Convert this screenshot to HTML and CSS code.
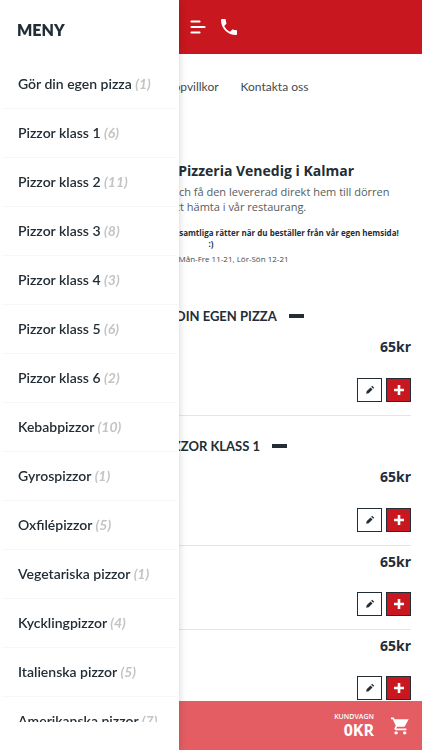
FILE: index.html
```html
<!DOCTYPE html>
<html lang="sv">
<head>
<meta charset="utf-8">
<meta name="viewport" content="width=device-width, initial-scale=1">
<title>Pizzeria Venedig</title>
<link rel="stylesheet" href="styles.css">
</head>
<body>
<svg class="sprite" aria-hidden="true">
  <symbol id="pencil" viewBox="0 0 12 12"><path d="M2 7.600 6.600 3 9 5.400 4.400 10 1.400 10.600zM7.400 2.200 8.600 1 11 3.400 9.800 4.600z"/></symbol>
  <symbol id="plus" viewBox="0 0 12 12"><path d="M4.700 1h2.600v3.700H11v2.600H7.300V11H4.700V7.300H1V4.700h3.700z"/></symbol>
</svg>

<header class="topbar">
  <button class="icon-button" aria-label="Meny">
    <svg width="16" height="14" viewBox="0 0 16 14" stroke="currentColor" stroke-width="2.2" stroke-linecap="round"><path d="M1.500 1.500h8M1.500 7h13M1.500 12.500h8"/></svg>
  </button>
  <a class="icon-button" href="#ring" aria-label="Ring oss">
    <svg width="16" height="16" viewBox="3 3 18 18" fill="currentColor"><path d="M6.620 10.790c1.440 2.830 3.760 5.140 6.590 6.590l2.200-2.200c.27-.27.67-.36 1.020-.24 1.120.37 2.330.57 3.570.57.55 0 1 .45 1 1V20c0 .55-.45 1-1 1-9.390 0-17-7.610-17-17 0-.55.45-1 1-1h3.500c.55 0 1 .45 1 1 0 1.250.2 2.450.57 3.570.11.35.03.74-.25 1.020z"/></svg>
  </a>
</header>

<nav class="links">
  <a href="#villkor">Köpvillkor</a>
  <a href="#kontakt">Kontakta oss</a>
</nav>

<main class="content">
  <section class="intro">
    <h1>Välkommen till Pizzeria Venedig i Kalmar</h1>
    <p class="lead">Beställ din pizza online här och få den levererad direkt hem till dörren<br>beställ för att hämta i vår restaurang.</p>
    <p class="offer">Just nu får du alltid hela 10% rabatt på samtliga rätter när du beställer från vår egen hemsida!<br>:)</p>
    <p class="hours">Öppettider: Mån-Fre 11-21, Lör-Sön 12-21</p>
  </section>

  <section class="group">
    <h2>GÖR DIN EGEN PIZZA<span class="dash"></span></h2>
    <article class="item">
      <strong class="price">65kr</strong>
      <div class="actions">
        <button class="square" aria-label="Anpassa"><svg><use href="#pencil"/></svg></button>
        <button class="square add" aria-label="Lägg till"><svg><use href="#plus"/></svg></button>
      </div>
    </article>
  </section>

  <section class="group">
    <h2>PIZZOR KLASS 1<span class="dash"></span></h2>
    <article class="item">
      <strong class="price">65kr</strong>
      <div class="actions">
        <button class="square" aria-label="Anpassa"><svg><use href="#pencil"/></svg></button>
        <button class="square add" aria-label="Lägg till"><svg><use href="#plus"/></svg></button>
      </div>
    </article>
    <article class="item">
      <strong class="price">65kr</strong>
      <div class="actions">
        <button class="square" aria-label="Anpassa"><svg><use href="#pencil"/></svg></button>
        <button class="square add" aria-label="Lägg till"><svg><use href="#plus"/></svg></button>
      </div>
    </article>
    <article class="item">
      <strong class="price">65kr</strong>
      <div class="actions">
        <button class="square" aria-label="Anpassa"><svg><use href="#pencil"/></svg></button>
        <button class="square add" aria-label="Lägg till"><svg><use href="#plus"/></svg></button>
      </div>
    </article>
  </section>
</main>

<a class="cart" href="#kundvagn">
  <span class="cart-text"><span class="cart-label">KUNDVAGN</span><strong class="cart-total">0KR</strong></span>
  <svg width="18" height="18" viewBox="1 2 21 20" fill="currentColor"><path d="M7 18c-1.100 0-1.990.9-1.990 2S5.900 22 7 22s2-.9 2-2-.9-2-2-2zM1 2v2h2l3.600 7.590-1.350 2.450C4.520 15.370 5.480 17 7 17h12v-2H7.420c-.14 0-.25-.11-.25-.25l.93-1.750h7.450c.75 0 1.410-.41 1.750-1.030L21.700 4H5.210l-.94-2H1zm16 16c-1.100 0-1.990.9-1.990 2s.89 2 1.990 2 2-.9 2-2-.9-2-2-2z"/></svg>
</a>

<aside class="drawer">
  <h2 class="drawer-title">MENY</h2>
  <ul class="menu">
    <li><a href="#1">Gör din egen pizza <em>(1)</em></a></li>
    <li><a href="#2">Pizzor klass 1 <em>(6)</em></a></li>
    <li><a href="#3">Pizzor klass 2 <em>(11)</em></a></li>
    <li><a href="#4">Pizzor klass 3 <em>(8)</em></a></li>
    <li><a href="#5">Pizzor klass 4 <em>(3)</em></a></li>
    <li><a href="#6">Pizzor klass 5 <em>(6)</em></a></li>
    <li><a href="#7">Pizzor klass 6 <em>(2)</em></a></li>
    <li><a href="#8">Kebabpizzor <em>(10)</em></a></li>
    <li><a href="#9">Gyrospizzor <em>(1)</em></a></li>
    <li><a href="#10">Oxfilépizzor <em>(5)</em></a></li>
    <li><a href="#11">Vegetariska pizzor <em>(1)</em></a></li>
    <li><a href="#12">Kycklingpizzor <em>(4)</em></a></li>
    <li><a href="#13">Italienska pizzor <em>(5)</em></a></li>
    <li><a href="#14">Amerikanska pizzor <em>(7)</em></a></li>
  </ul>
</aside>
</body>
</html>
```
FILE: styles.css
```css
* { box-sizing: border-box; }
html { overflow: hidden; }
body {
  margin: 0;
  height: 100vh;
  overflow: hidden;
  background: #fff;
  color: #222d35;
  font-family: "Open Sans", sans-serif;
}
a { color: inherit; text-decoration: none; }
h1, h2, p, ul { margin: 0; padding: 0; }
button { font: inherit; cursor: pointer; }
.sprite { display: none; }

.topbar {
  display: flex;
  align-items: center;
  gap: 15px;
  height: 54px;
  padding-left: 190px;
  background: #c8171e;
  color: #fff;
}
.icon-button {
  display: flex;
  padding: 0;
  border: 0;
  background: none;
  color: #fff;
}

.links {
  display: flex;
  gap: 22px;
  padding: 24px 0 0 166px;
  font: 12px/18px Lato, sans-serif;
  color: #444b50;
}

.content { padding: 0 11px; }
.intro {
  padding: 65px 10px 0;
  text-align: center;
}
.intro h1 { font-size: 14px; line-height: 20px; }
.lead {
  margin-top: 3px;
  font-size: 11px;
  line-height: 15px;
  color: #555c61;
}
.offer {
  margin-top: 13px;
  font-size: 8px;
  line-height: 11px;
  font-weight: 700;
}
.hours {
  margin-top: 4px;
  font-size: 8px;
  line-height: 11px;
  color: #444b50;
}

.group { padding-top: 20px; }
.intro + .group { padding-top: 42px; }
.group h2 {
  display: flex;
  align-items: center;
  justify-content: center;
  gap: 12px;
  padding-left: 26px;
  font: 700 13px/20px Lato, sans-serif;
}
.dash { width: 15px; height: 4px; background: #222d35; }
.item {
  display: flex;
  flex-direction: column;
  align-items: flex-end;
  justify-content: space-between;
  height: 84px;
  padding: 6px 0 13px;
  border-bottom: 1px solid #e5e5e5;
}
.group h2 + .item { height: 90px; padding-top: 11px; }
.price { font-size: 14px; line-height: 20px; }
.actions { display: flex; gap: 4px; }
.square {
  display: flex;
  align-items: center;
  justify-content: center;
  width: 25px;
  height: 24px;
  padding: 0;
  border: 1px solid #222d35;
  background: #fff;
  color: #222d35;
}
.square svg { width: 10px; height: 10px; fill: currentColor; }
.add { background: #c8171e; color: #fff; }
.add svg { width: 12px; height: 12px; }

.cart {
  position: fixed;
  inset: auto 0 0;
  display: flex;
  align-items: center;
  justify-content: flex-end;
  gap: 17px;
  height: 49px;
  padding-right: 13px;
  background: #e45d63;
  color: #fff;
}
.cart-text { display: flex; flex-direction: column; align-items: flex-end; }
.cart-label { font-size: 7px; line-height: 9px; font-weight: 600; }
.cart-total { font-size: 16px; line-height: 18px; }

.drawer {
  position: fixed;
  inset: 0 auto 0 0;
  display: flex;
  flex-direction: column;
  width: 179px;
  padding-bottom: 28px;
  background: #fff;
  box-shadow: 0 0 8px rgba(0, 0, 0, 0.18);
  font-family: Lato, sans-serif;
}
.drawer-title {
  flex: none;
  padding: 20px 17px 0;
  height: 60px;
  font-size: 16px;
  line-height: 20px;
  font-weight: 800;
}
.menu {
  flex: 1;
  min-height: 0;
  overflow: hidden;
  list-style: none;
}
.menu a {
  display: block;
  height: 49px;
  margin: 0 2px;
  padding: 14px 16px 0;
  border-bottom: 1px solid #f7f7f7;
  font-size: 14px;
  line-height: 20px;
  font-weight: 600;
  white-space: nowrap;
}
.menu em { color: #c4c4c4; font-weight: 700; }
```
